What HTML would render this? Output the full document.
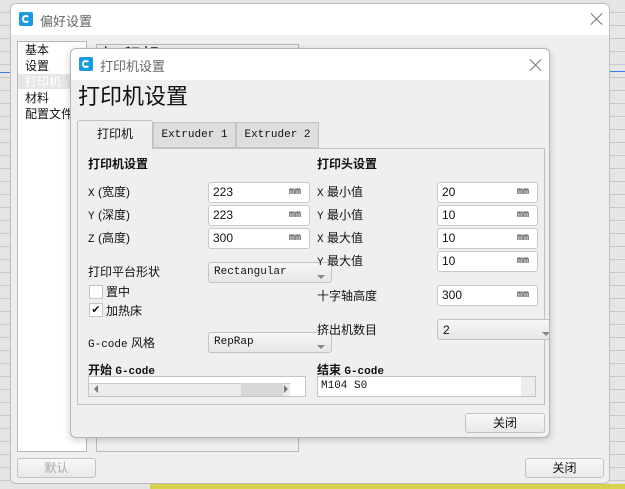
<!DOCTYPE html>
<html><head><meta charset="utf-8"><style>
*{box-sizing:border-box;margin:0;padding:0}
body{width:625px;height:489px;overflow:hidden;background:#e4e4e4;position:relative;font-family:"Liberation Sans","Noto Sans CJK SC",sans-serif;font-size:12px;color:#111}
.a{position:absolute}
.l{position:absolute;line-height:14px;white-space:nowrap}
.mono{font-family:"Liberation Mono","Noto Sans CJK SC",monospace;font-size:11px}
.inp{position:absolute;background:#fff;border:1px solid #c8c8c8;border-radius:3px;height:21px;font-size:12px;padding:2px 4px}
.inp .u{position:absolute;right:8px;top:4px;font-family:"Liberation Mono",monospace;font-size:10px}
.sel{position:absolute;border:1px solid #c4c4c4;border-radius:3px;height:21px;background:linear-gradient(#f6f6f6,#e6e6e6);padding:3px 5px}
.sel:after{content:"";position:absolute;right:6px;top:12px;border:4px solid transparent;border-top:4px solid #888}
.btn{position:absolute;border:1px solid #c2c2c2;border-radius:3px;height:20px;background:linear-gradient(#f8f8f8,#e8e8e8);text-align:center;line-height:18px;font-size:12px}
.logo{position:absolute;width:14px;height:14px;background:#1a9be0;border-radius:2px}
.logo:after{content:"";position:absolute;left:3px;top:3px;width:4px;height:4px;border:2px solid #fff;border-right-color:transparent;border-radius:50%}
.x{position:absolute;width:12px;height:12px}
.x:before,.x:after{content:"";position:absolute;left:5px;top:-2px;width:1px;height:16px;background:#777;transform:rotate(45deg)}
.x:after{transform:rotate(-45deg)}
</style></head><body>
<div class="a" style="left:0;top:0;width:10px;height:489px;background:repeating-linear-gradient(#e4e4e4 0 12px,#c8c8c8 12px 13px)"></div>
<div class="a" style="left:0;top:72px;width:10px;height:1px;background:#3a7ee8"></div>
<div class="a" style="left:610px;top:0;width:15px;height:489px;background:repeating-linear-gradient(#e6e6e6 0 12px,#c8c8c8 12px 13px)"></div>
<div class="a" style="left:610px;top:71px;width:15px;height:1px;background:#3a7ee8"></div>
<div class="a" style="left:150px;top:484px;width:475px;height:5px;background:#d6d44c"></div>

<div class="a" style="left:10px;top:3px;width:600px;height:481px;background:#efefef;border:1px solid #bdbdbd;border-radius:6px;overflow:hidden">
 <div class="a" style="left:0;top:0;width:600px;height:31px;background:#fff"></div>
 <div class="logo" style="left:8px;top:8px"></div>
 <div class="a" style="left:29px;top:7px;font-size:13px;color:#666">偏好设置</div>
 <div class="x" style="left:580px;top:9px"></div>
 <div class="a" style="left:6px;top:37px;width:70px;height:411px;background:#fff;border:1px solid #b8b8b8"></div>
 <div class="a" style="left:7px;top:70px;width:62px;height:15px;background:#e6e6e6"></div>
 <div class="a" style="left:14px;top:38px;line-height:16px;font-size:12px">基本<br>设置<br><span style="color:#fff">打印机</span><br>材料<br>配置文件</div>
 <div class="a" style="left:85px;top:40px;width:203px;height:408px;border:1px solid #b8b8b8"></div>
 <div class="a" style="left:90px;top:36px;font-size:20px;color:#333">打印机</div>
 <div class="btn" style="left:6px;top:454px;width:79px;color:#aaa">默认</div>
 <div class="btn" style="left:514px;top:454px;width:79px">关闭</div>
</div>

<div class="a" style="left:70px;top:48px;width:480px;height:390px;background:#efefef;border:1px solid #b5b5b5;border-radius:6px;overflow:hidden;box-shadow:0 2px 8px rgba(0,0,0,.2)">
 <div class="a" style="left:0;top:0;width:480px;height:31px;background:#fff"></div>
 <div class="logo" style="left:8px;top:8px"></div>
 <div class="a" style="left:29px;top:7px;font-size:13px;color:#666">打印机设置</div>
 <div class="x" style="left:459px;top:10px"></div>
 <div class="a" style="left:7px;top:34px;font-size:22px;line-height:28px;color:#111">打印机设置</div>
 <div class="a" style="left:6px;top:71px;width:76px;height:29px;background:#efefef;border:1px solid #c0c0c0;border-bottom:none;border-radius:3px 3px 0 0;z-index:2;text-align:center;line-height:27px;font-size:12px">打印机</div>
 <div class="a mono" style="left:82px;top:73px;width:83px;height:26px;background:#dedede;border:1px solid #c4c4c4;text-align:center;line-height:25px">Extruder 1</div>
 <div class="a mono" style="left:165px;top:73px;width:83px;height:26px;background:#dedede;border:1px solid #c4c4c4;text-align:center;line-height:25px">Extruder 2</div>
 <div class="a" style="left:6px;top:99px;width:468px;height:257px;border:1px solid #c0c0c0"></div>

 <div class="l" style="left:17px;top:108px;font-weight:bold">打印机设置</div>
 <div class="l" style="left:17px;top:136px"><span class="mono">X</span> (宽度)</div>
 <div class="l" style="left:17px;top:159px"><span class="mono">Y</span> (深度)</div>
 <div class="l" style="left:17px;top:182px"><span class="mono">Z</span> (高度)</div>
 <div class="inp" style="left:137px;top:133px;width:102px">223<span class="u">mm</span></div>
 <div class="inp" style="left:137px;top:156px;width:102px">223<span class="u">mm</span></div>
 <div class="inp" style="left:137px;top:179px;width:102px">300<span class="u">mm</span></div>
 <div class="l" style="left:17px;top:216px">打印平台形状</div>
 <div class="sel mono" style="left:137px;top:213px;width:124px">Rectangular</div>
 <div class="a" style="left:18px;top:236px;width:14px;height:14px;background:#fff;border:1px solid #c4c4c4"></div>
 <div class="l" style="left:35px;top:236px">置中</div>
 <div class="a" style="left:18px;top:254px;width:14px;height:14px;background:#fff;border:1px solid #c4c4c4;font-size:11px;line-height:12px;text-align:center">✔</div>
 <div class="l" style="left:35px;top:255px">加热床</div>
 <div class="l" style="left:17px;top:287px"><span class="mono">G-code</span> 风格</div>
 <div class="sel mono" style="left:137px;top:283px;width:124px">RepRap</div>
 <div class="l" style="left:17px;top:314px;font-weight:bold">开始 <span class="mono" style="font-weight:bold">G-code</span></div>
 <div class="a" style="left:17px;top:327px;width:218px;height:21px;background:#fff;border:1px solid #c4c4c4"></div>
 <div class="a" style="left:18px;top:334px;width:201px;height:13px;background:#ececec;border-top:1px solid #ccc"></div>
 <div class="a" style="left:170px;top:334px;width:42px;height:13px;background:#d8d8d8"></div>
 <div class="a" style="left:23px;top:336px;border:4px solid transparent;border-right:4px solid #777;border-left:none"></div>
 <div class="a" style="left:213px;top:336px;border:4px solid transparent;border-left:4px solid #777;border-right:none"></div>

 <div class="l" style="left:246px;top:108px;font-weight:bold">打印头设置</div>
 <div class="l" style="left:246px;top:136px"><span class="mono">X</span> 最小值</div>
 <div class="l" style="left:246px;top:159px"><span class="mono">Y</span> 最小值</div>
 <div class="l" style="left:246px;top:182px"><span class="mono">X</span> 最大值</div>
 <div class="l" style="left:246px;top:205px"><span class="mono">Y</span> 最大值</div>
 <div class="inp" style="left:366px;top:133px;width:101px">20<span class="u">mm</span></div>
 <div class="inp" style="left:366px;top:156px;width:101px">10<span class="u">mm</span></div>
 <div class="inp" style="left:366px;top:179px;width:101px">10<span class="u">mm</span></div>
 <div class="inp" style="left:366px;top:202px;width:101px">10<span class="u">mm</span></div>
 <div class="l" style="left:246px;top:240px">十字轴高度</div>
 <div class="inp" style="left:366px;top:236px;width:101px">300<span class="u">mm</span></div>
 <div class="l" style="left:246px;top:274px">挤出机数目</div>
 <div class="sel" style="left:366px;top:270px;width:120px">2</div>
 <div class="l" style="left:246px;top:314px;font-weight:bold">结束 <span class="mono" style="font-weight:bold">G-code</span></div>
 <div class="a mono" style="left:246px;top:327px;width:219px;height:21px;background:#fff;border:1px solid #c4c4c4;padding:3px 3px">M104 S0</div>
 <div class="a" style="left:450px;top:328px;width:14px;height:19px;background:#ececec"></div>

 <div class="btn" style="left:394px;top:364px;width:80px">关闭</div>
</div>
</body></html>
